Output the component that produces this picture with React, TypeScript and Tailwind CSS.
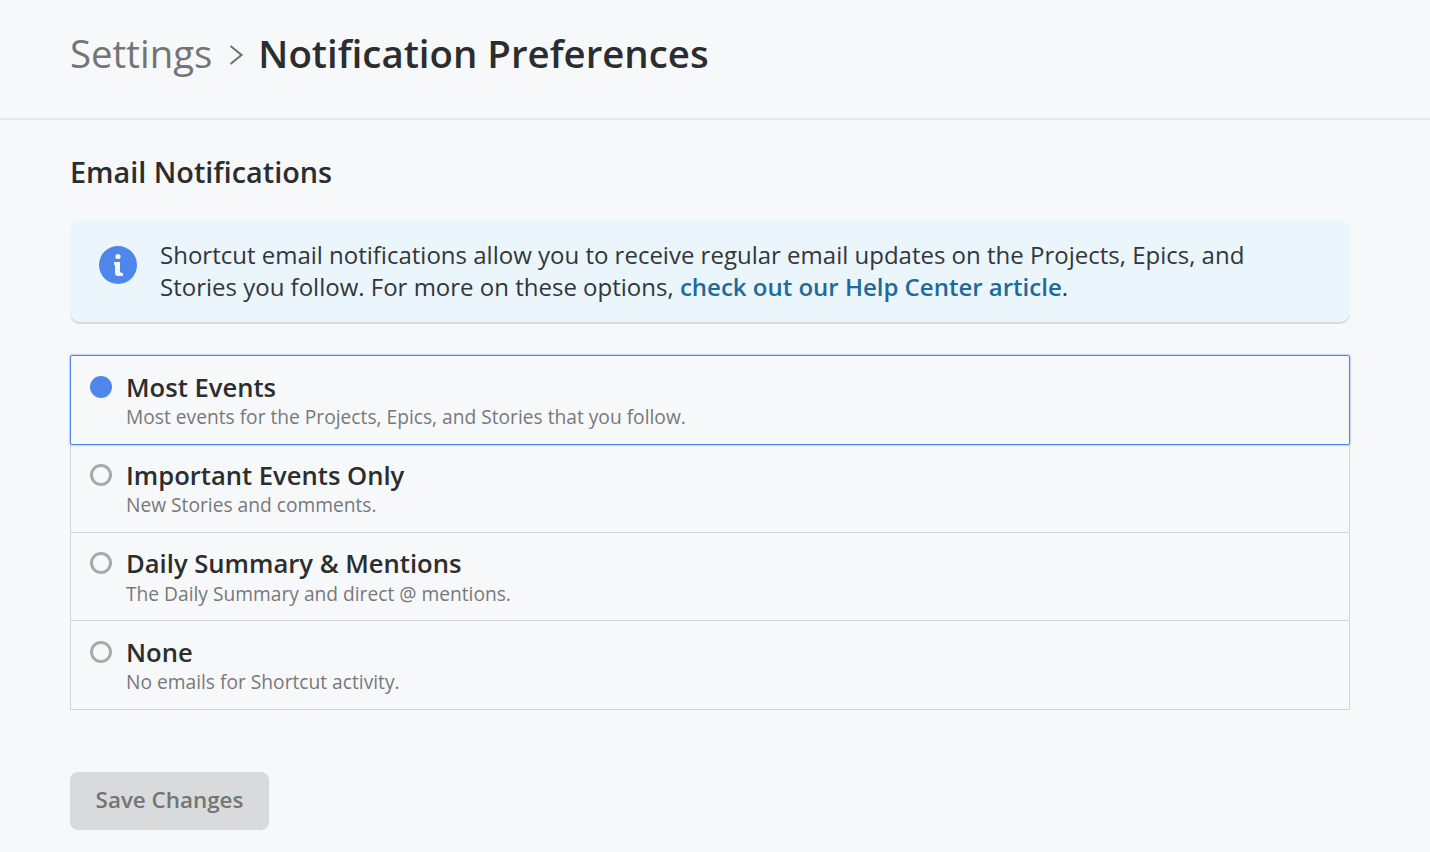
const F = "font-['Open_Sans',sans-serif]";

const options = [
  { t: "Most Events", d: "Most events for the Projects, Epics, and Stories that you follow.", h: "h-[90px]", tm: "mt-[14px]", dm: "mt-[-1px]", rm: "mt-[20px]" },
  { t: "Important Events Only", d: "New Stories and comments.", h: "h-[88px]", tm: "mt-[13px]", dm: "mt-[-1px]", rm: "mt-[19px]" },
  { t: "Daily Summary & Mentions", d: "The Daily Summary and direct @ mentions.", h: "h-[88px]", tm: "mt-[13px]", dm: "mt-0", rm: "mt-[19px]" },
  { t: "None", d: "No emails for Shortcut activity.", h: "h-[89px]", tm: "mt-[14px]", dm: "mt-[-1px]", rm: "mt-[20px]" },
];

export default function App() {
  return (
    <div className={`${F} h-[852px] overflow-hidden bg-[#f7f8fa] text-[#2b2d2f]`}>
      <header className="h-[120px] border-b-2 border-[#e8e9ec] pl-[70px] pt-[24px] flex items-start">
        <span className="text-[38.4px] leading-[58px] font-normal text-[#737476]">Settings</span>
        <svg className="ml-[16px] mt-[20px]" width="16" height="22" viewBox="0 0 16 22" fill="none" stroke="#737476" strokeWidth="2.2"><path d="M2.5 2 L13.5 11 L2.5 20" /></svg>
        <span className="ml-[14px] text-[38.4px] leading-[58px] font-semibold">Notification Preferences</span>
      </header>
      <main className="pl-[70px] pr-[80px]">
        <h2 className="mt-[31px] text-[28.8px] leading-[42px] font-semibold">Email Notifications</h2>
        <div className="mt-[27px] h-[102px] rounded-[10px] bg-[#eaf5fc] shadow-[0_2px_0_#d5dbe0] flex pl-[29px] pt-[19px]">
          <svg className="mt-[7px] shrink-0" width="38" height="38" viewBox="0 0 38 38">
            <circle cx="19" cy="19" r="19" fill="#4f86ec" />
            <circle cx="19" cy="10.5" r="2.6" fill="#f3f8fd" />
            <path d="M15 16 H21 V25 Q21 27 24 27 V30 H19 Q16 30 16 27 V19 H15 Z" fill="#f3f8fd" />
          </svg>
          <p className="ml-[23px] text-[24px] leading-[32px] text-[#33363a]">
            Shortcut email notifications allow you to receive regular email updates on the Projects, Epics, and<br />
            Stories you follow. For more on these options, <span className="font-semibold text-[#1f6a9c]">check out our Help Center article</span>.
          </p>
        </div>
        <div className="mt-[33px] flex flex-col">
          {options.map((o, i) => (
            <div
              key={o.t}
              className={`${o.h} flex pl-[19px] ${
                i === 0
                  ? "border border-[#4f86ec] shadow-[0_0_2px_#4f86ec] rounded-[2px] relative"
                  : "border-x border-b border-[#d4d5d8]"
              }`}
            >
              {i === 0 ? (
                <span className={`${o.rm} h-[22px] w-[22px] shrink-0 rounded-full bg-[#4f86ec]`} />
              ) : (
                <span className={`${o.rm} h-[22px] w-[22px] shrink-0 rounded-full border-[3px] border-[#a8a9ab]`} />
              )}
              <div className="ml-[14px]">
                <div className={`text-[25.6px] leading-[36px] font-semibold text-[#2b2d2f] ${o.tm}`}>{o.t}</div>
                <div className={`text-[19.2px] leading-[24px] text-[#77787a] ${o.dm}`}>{o.d}</div>
              </div>
            </div>
          ))}
        </div>
        <button className="mt-[62px] h-[58px] w-[199px] rounded-[8px] bg-[#d9dadc] pb-[2px] text-[22.4px] font-semibold text-[#737476] flex items-center justify-center">Save Changes</button>
      </main>
    </div>
  );
}
